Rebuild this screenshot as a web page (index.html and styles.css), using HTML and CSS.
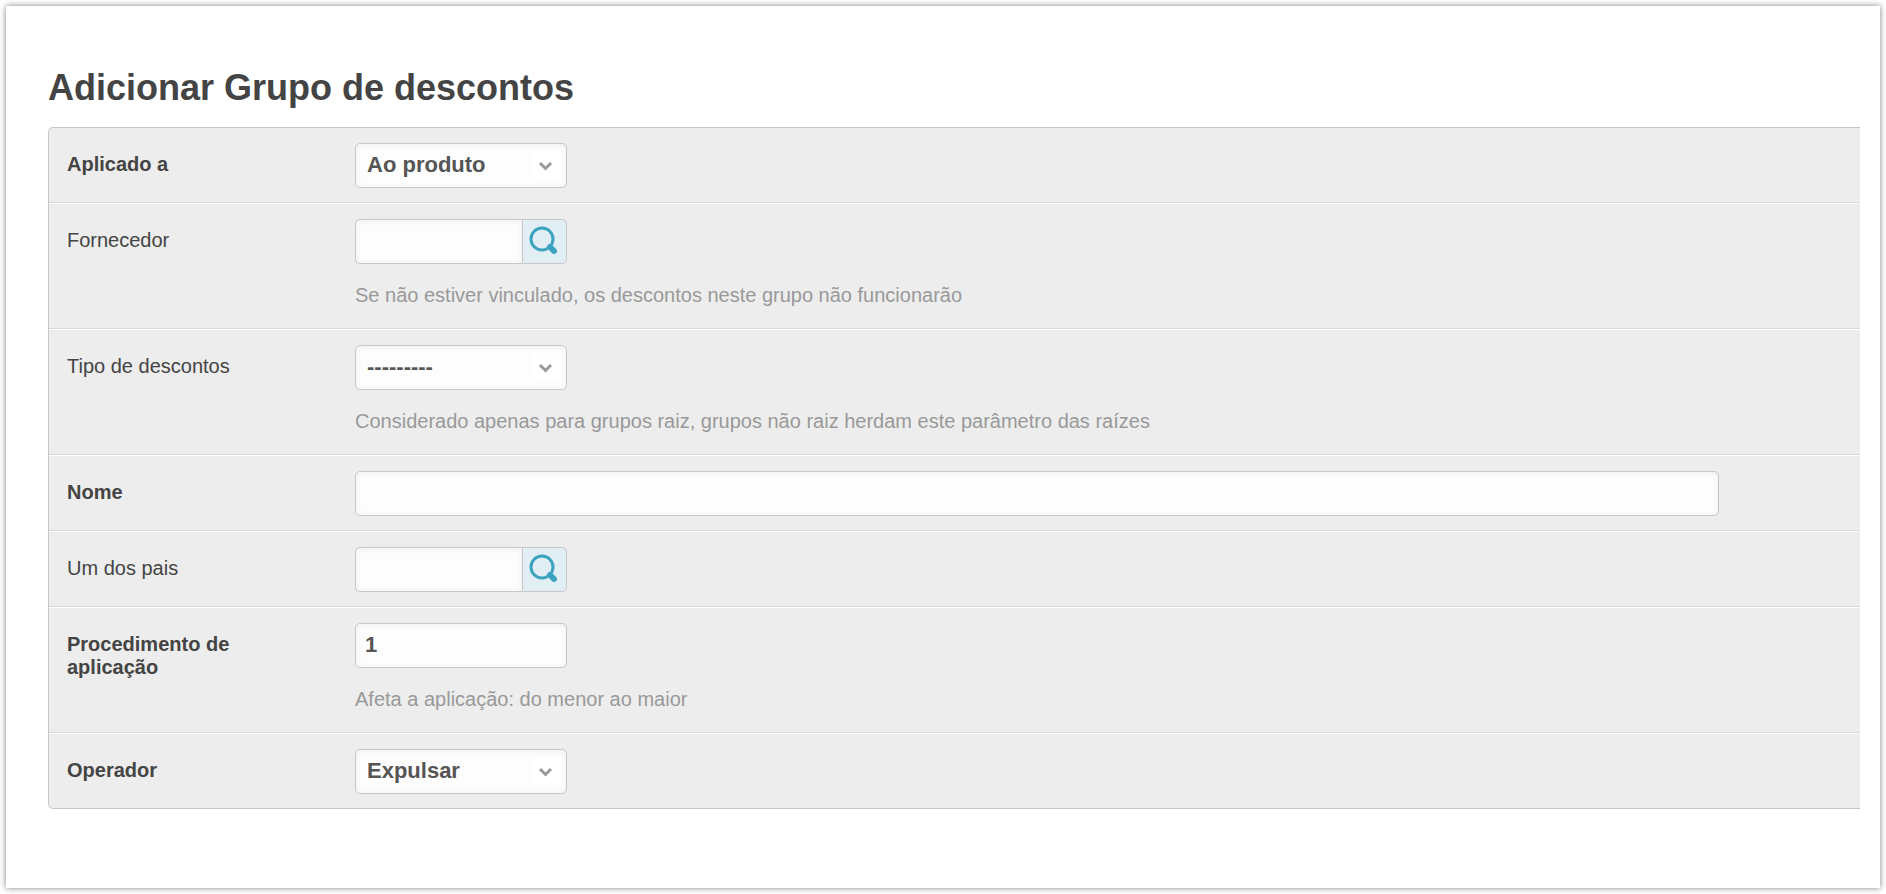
FILE: index.html
```html
<!DOCTYPE html>
<html lang="pt">
<head>
    <meta charset="UTF-8">
    <meta name="viewport" content="width=device-width, initial-scale=1.0">
    <title>Adicionar Grupo de descontos</title>
    <link rel="stylesheet" href="styles.css">
</head>
<body>
    <main class="panel">
        <h1>Adicionar Grupo de descontos</h1>

        <form class="module">
            <div class="row">
                <label class="required" for="applied_to">Aplicado a</label>
                <div class="field">
                    <select id="applied_to" name="applied_to">
                        <option value="product" selected>Ao produto</option>
                    </select>
                </div>
            </div>

            <div class="row">
                <label for="vendor">Fornecedor</label>
                <div class="field">
                    <div class="lookup">
                        <input type="text" id="vendor" name="vendor">
                        <button type="button" aria-label="Pesquisar fornecedor">
                            <svg width="42" height="43" viewBox="0 0 42 43">
                                <circle cx="19" cy="19" r="11" fill="none" stroke="#3ba3c0" stroke-width="3"/>
                                <path d="M25 25L31 31" stroke="#3ba3c0" stroke-width="4"/>
                                <path d="M28.500 28.500L31 31" stroke="#3ba3c0" stroke-width="6" stroke-linecap="round"/>
                            </svg>
                        </button>
                    </div>
                    <p class="help">Se não estiver vinculado, os descontos neste grupo não funcionarão</p>
                </div>
            </div>

            <div class="row">
                <label for="discount_type">Tipo de descontos</label>
                <div class="field">
                    <select id="discount_type" name="discount_type">
                        <option value="" selected>---------</option>
                    </select>
                    <p class="help">Considerado apenas para grupos raiz, grupos não raiz herdam este parâmetro das raízes</p>
                </div>
            </div>

            <div class="row">
                <label class="required" for="name">Nome</label>
                <div class="field">
                    <input type="text" class="wide" id="name" name="name">
                </div>
            </div>

            <div class="row">
                <label for="parent">Um dos pais</label>
                <div class="field">
                    <div class="lookup">
                        <input type="text" id="parent" name="parent">
                        <button type="button" aria-label="Pesquisar um dos pais">
                            <svg width="42" height="43" viewBox="0 0 42 43">
                                <circle cx="19" cy="19" r="11" fill="none" stroke="#3ba3c0" stroke-width="3"/>
                                <path d="M25 25L31 31" stroke="#3ba3c0" stroke-width="4"/>
                                <path d="M28.500 28.500L31 31" stroke="#3ba3c0" stroke-width="6" stroke-linecap="round"/>
                            </svg>
                        </button>
                    </div>
                </div>
            </div>

            <div class="row">
                <label class="required" for="order">Procedimento de aplicação</label>
                <div class="field">
                    <input type="text" id="order" name="order" value="1">
                    <p class="help">Afeta a aplicação: do menor ao maior</p>
                </div>
            </div>

            <div class="row">
                <label class="required" for="operator">Operador</label>
                <div class="field">
                    <select id="operator" name="operator">
                        <option value="kick" selected>Expulsar</option>
                    </select>
                </div>
            </div>
        </form>
    </main>
</body>
</html>
```
FILE: styles.css
```css
*{
    padding: 0;
    margin: 0;
    box-sizing: border-box;
    font-family: "Liberation Sans", Arial, sans-serif;
}
body{
    min-height: 100vh;
    padding: 6px;
    display: flex;
    background-color: #fff;
}
.panel{
    flex: 1;
    padding: 61px 20px 61px 42px;
    background-color: #fff;
    box-shadow: 0 0 6px rgba(0, 0, 0, 0.5);
}
h1{
    margin-bottom: 18px;
    font-size: 36px;
    line-height: 42px;
    color: #444;
}
.module{
    border: 1px solid #c7c7c7;
    border-right: none;
    border-radius: 5px 0 0 5px;
    background-color: #ededed;
}
.row{
    display: flex;
    padding: 15px 141px 14px 18px;
    border-top: 1px solid #fff;
    border-bottom: 1px solid #d9d9d9;
}
.row:first-child{
    border-top: none;
}
.row:last-child{
    border-bottom: none;
}
.row label{
    width: 200px;
    margin-top: 10px;
    margin-right: 88px;
    flex-shrink: 0;
    font-size: 20px;
    line-height: 23px;
    color: #444;
}
.row .required{
    font-weight: bold;
}
.field{
    flex: 1;
}
input, select{
    display: block;
    width: 212px;
    height: 45px;
    padding: 0 9px 2px;
    border: 1px solid #c7c7c7;
    border-radius: 5px;
    outline: none;
    font-size: 22px;
    font-weight: bold;
    color: #555;
    background-color: #fdfdfd;
    box-shadow: inset 0 1px 6px #eee;
}
select{
    padding-left: 11px;
    appearance: none;
    background-image: url("data:image/svg+xml,%3Csvg xmlns='http://www.w3.org/2000/svg' width='27' height='27'%3E%3Crect width='27' height='27' fill='%23fff'/%3E%3Cpath d='M8 11l5.500 5.500l5.500-5.500' fill='none' stroke='%23999' stroke-width='3'/%3E%3C/svg%3E");
    background-repeat: no-repeat;
    background-position: right 7px center;
}
.wide{
    width: 100%;
}
.lookup{
    display: flex;
    width: 212px;
}
.lookup input{
    flex: 1;
    min-width: 0;
    border-right: none;
    border-radius: 5px 0 0 5px;
}
.lookup button{
    width: 45px;
    height: 45px;
    border: 1px solid #c7c7c7;
    border-radius: 0 5px 5px 0;
    background-color: #e1eff5;
    cursor: pointer;
}
.lookup svg{
    display: block;
}
.help{
    margin: 20px 0 7px;
    font-size: 20px;
    line-height: 23px;
    color: #999;
}
```
